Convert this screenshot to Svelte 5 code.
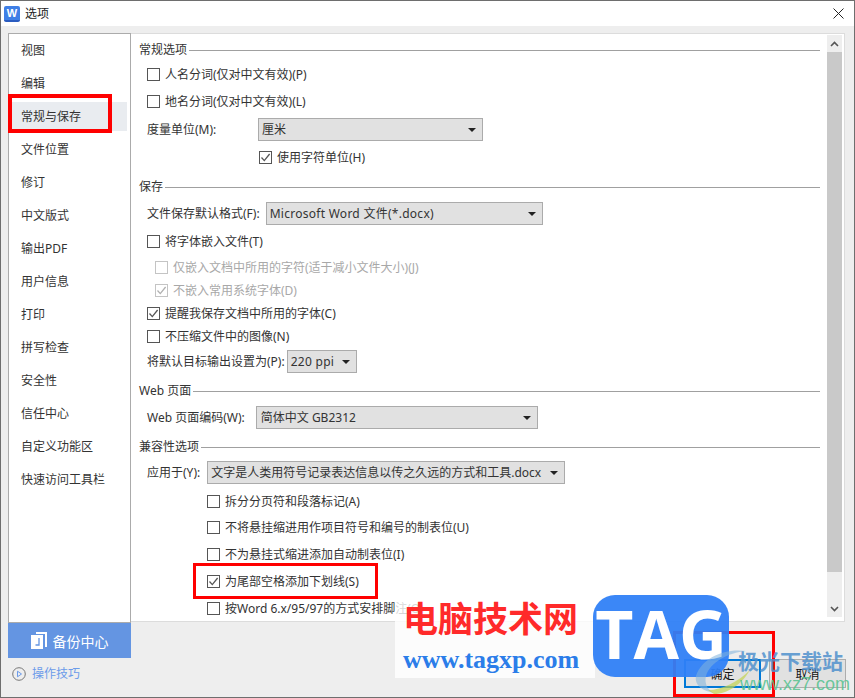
<script>
  const nav = ["视图", "编辑", "常规与保存", "文件位置", "修订", "中文版式", "输出PDF", "用户信息", "打印", "拼写检查", "安全性", "信任中心", "自定义功能区", "快速访问工具栏"];
  const selected = 2;
</script>

{#snippet check(label, gap, on = false, cls = "")}
  <label class="row {gap} {cls}">
    <span class="box" class:dim={cls.includes("muted")}>
      {#if on}
        <svg viewBox="0 0 13 13" width="13" height="13"><path d="M2.500 6.500 5.300 9.600 10.600 3" fill="none" stroke="currentColor" stroke-width="1.300" /></svg>
      {/if}
    </span>
    <span>{label}</span>
  </label>
{/snippet}

{#snippet select(text, cls)}
  <div class="select {cls}">
    <span>{text}</span>
    <i class="arrow"></i>
  </div>
{/snippet}

<div class="window">
  <header class="titlebar">
    <div class="logo">W</div>
    <span class="title">选项</span>
    <svg class="close" viewBox="0 0 12 12" width="12" height="12"><path d="M.5.5l10 10M10.500.5l-10 10" stroke="#222" stroke-width="1" fill="none" /></svg>
  </header>

  <div class="body">
    <aside class="side">
      <nav class="nav">
        {#each nav as item, i}
          <div class="nav-item" class:active={i === selected}>{item}</div>
        {/each}
      </nav>
      <button class="backup">
        <svg viewBox="0 0 16 17" width="16" height="17"><path d="M5 0h11v15h-2V2H5z M0 3h12v14H0z" fill="#fff" /><path d="M8 6v7H4.500" fill="none" stroke="#6495e2" stroke-width="1.300" /></svg>
        备份中心
      </button>
      <div class="tips">
        <svg viewBox="0 0 14 14" width="14" height="14"><circle cx="7" cy="7" r="6.300" fill="none" stroke="#777" /><path d="M5.500 4.200 9.500 7l-4 2.800z" fill="none" stroke="#6b9bea" /></svg>
        <span>操作技巧</span>
      </div>
    </aside>

    <div class="main">
      <div class="panel">
        <div class="scroll">
          <h2 class="legend">常规选项</h2>
          {@render check("人名分词(仅对中文有效)(P)", "g3")}
          {@render check("地名分词(仅对中文有效)(L)", "g4")}
          <div class="row g5 field"><span class="lbl-unit">度量单位(M):</span>{@render select("厘米", "w-unit")}</div>
          {@render check("使用字符单位(H)", "g5", true, "in-unit")}

          <h2 class="legend g8">保存</h2>
          <div class="row g5 field"><span>文件保存默认格式(F):</span>{@render select("Microsoft Word 文件(*.docx)", "w-format latin")}</div>
          {@render check("将字体嵌入文件(T)", "g5")}
          {@render check("仅嵌入文档中所用的字符(适于减小文件大小)(J)", "g3", false, "muted")}
          {@render check("不嵌入常用系统字体(D)", "g0", true, "muted")}
          {@render check("提醒我保存文档中所用的字体(C)", "g0", true)}
          {@render check("不压缩文件中的图像(N)", "g0")}
          <div class="row g2 field"><span>将默认目标输出设置为(P):</span>{@render select("220 ppi", "w-ppi latin")}</div>

          <h2 class="legend g8">Web 页面</h2>
          <div class="row g5 field"><span>Web 页面编码(W):</span>{@render select("简体中文 GB2312", "w-enc")}</div>

          <h2 class="legend g8">兼容性选项</h2>
          <div class="row g4 field"><span>应用于(Y):</span>{@render select("文字是人类用符号记录表达信息以传之久远的方式和工具.docx", "w-doc")}</div>
          {@render check("拆分分页符和段落标记(A)", "g6", false, "deep")}
          {@render check("不将悬挂缩进用作项目符号和编号的制表位(U)", "g3", false, "deep")}
          {@render check("不为悬挂式缩进添加自动制表位(I)", "g4", false, "deep")}
          {@render check("为尾部空格添加下划线(S)", "g4", true, "deep")}
          {@render check("按Word 6.x/95/97的方式安排脚注(O)", "g4", false, "deep")}
        </div>
        <div class="scrollbar">
          <div class="sb-btn"><svg viewBox="0 0 9 6" width="9" height="6"><path d="M1 5 4.500 1.500 8 5" fill="none" stroke="#555" stroke-width="1.600" /></svg></div>
          <div class="thumb"></div>
          <div class="sb-btn"><svg viewBox="0 0 9 6" width="9" height="6"><path d="M1 1 4.500 4.500 8 1" fill="none" stroke="#555" stroke-width="1.600" /></svg></div>
        </div>
      </div>
      <footer class="actions">
        <button class="btn primary">确定</button>
        <button class="btn">取消</button>
      </footer>
    </div>
  </div>

  <!-- annotations and watermark sit on top of the dialog -->
  <div class="mark mark-nav"></div>
  <div class="mark mark-check"></div>
  <div class="wm-back"></div>
  <div class="wm-site">电脑技术网</div>
  <div class="wm-url">www.tagxp.com</div>
  <div class="mark mark-ok"></div>
  <div class="wm-tag">TAG</div>
  <svg class="wm-swoosh" viewBox="0 0 70 50" width="70" height="50">
    <path d="M2 30C8 12 30 2 52 5 34 7 16 16 12 30 10 38 14 44 20 47 10 45 0 40 2 30z" fill="#7fb2dc" opacity=".55" />
    <path d="M14 44C28 44 44 36 56 24 48 38 34 48 20 48z" fill="#c3d34e" opacity=".7" />
  </svg>
  <div class="wm-xz">极光下载站</div>
  <div class="wm-xz7">www.xz7.com</div>
</div>

<style>
  :global(body) {
    margin: 0;
    background: #eee;
  }
  .window {
    position: relative;
    box-sizing: border-box;
    width: 855px;
    height: 698px;
    overflow: hidden;
    border: 1px solid #6e6e6e;
    background: #eeeeee;
    font: 12px/18px "Noto Sans", "Noto Sans CJK SC", sans-serif;
    color: #333;
  }
  .titlebar {
    display: flex;
    align-items: center;
    height: 25px;
    background: #fff;
  }
  .logo {
    width: 16px;
    height: 16px;
    margin-left: 3px;
    border-radius: 2px;
    background: #3f7fe6;
    border-bottom: 2px solid #2a5cc0;
    box-sizing: border-box;
    color: #fff;
    font: bold 11px/14px "Liberation Sans", sans-serif;
    text-align: center;
  }
  .title {
    margin-left: 5px;
    color: #222;
  }
  .close {
    margin-left: auto;
    margin-right: 9px;
  }
  .body {
    display: flex;
    height: 670px;
    padding: 7px 9px 0 7px;
    box-sizing: border-box;
  }
  .side {
    display: flex;
    flex-direction: column;
    width: 123px;
    flex: none;
  }
  .nav {
    box-sizing: border-box;
    height: 590px;
    border: 1px solid #ababab;
    background: #fff;
    display: flex;
    flex-direction: column;
  }
  .nav-item {
    flex: none;
    box-sizing: border-box;
    height: 33px;
    line-height: 30px;
    padding-left: 12px;
    margin-right: 3px;
    border: solid transparent;
    border-width: 2px 0;
    background-clip: padding-box;
    color: #333;
  }
  .active {
    background-color: #e9ecf0;
  }
  .backup {
    display: flex;
    align-items: center;
    justify-content: center;
    gap: 6px;
    height: 35px;
    border: 0;
    background: #6495e2;
    color: #fff;
    font: 14px "Noto Sans CJK SC", sans-serif;
    padding: 0;
  }
  .tips {
    display: flex;
    align-items: center;
    gap: 6px;
    margin: 7px 0 0 4px;
    color: #6b9bea;
  }
  .main {
    flex: 1;
    min-width: 0;
    display: flex;
    flex-direction: column;
  }
  .panel {
    display: flex;
    box-sizing: border-box;
    height: 589px;
    background: #fff;
    border: 1px solid #dcdcdc;
    border-left: 0;
    padding: 1px 2px 4px 0;
  }
  .scroll {
    flex: 1;
    min-width: 0;
    padding: 5px 7px 0 8px;
    overflow: hidden;
  }
  .legend {
    display: flex;
    align-items: center;
    gap: 2px;
    height: 20px;
    margin: 0;
    font: inherit;
    line-height: 20px;
    color: #333;
  }
  .legend::after {
    content: "";
    flex: 1;
    height: 1px;
    background: #a0a0a0;
  }
  .row {
    display: flex;
    align-items: center;
    height: 23px;
    padding-left: 8px;
    white-space: nowrap;
  }
  .g0 { margin-top: 0; }
  .g2 { margin-top: 2px; }
  .g3 { margin-top: 3px; }
  .g4 { margin-top: 4px; }
  .g5 { margin-top: 5px; }
  .g6 { margin-top: 6px; }
  .g8 { margin-top: 8px; }
  .box {
    display: flex;
    flex: none;
    box-sizing: border-box;
    width: 13px;
    height: 13px;
    margin-right: 5px;
    border: 1px solid #555;
    color: #555;
    background: #fff;
  }
  .box svg {
    margin: -1px;
  }
  .box.dim {
    border-color: #c4c4c4;
    color: #b0b0b0;
  }
  .muted {
    margin-left: 8px;
    color: #a8a8a8;
  }
  .in-unit {
    padding-left: 120px;
  }
  .deep {
    padding-left: 68px;
  }
  .field > span:first-child {
    margin-right: 5px;
  }
  .lbl-unit {
    min-width: 106px;
  }
  .select {
    display: flex;
    align-items: center;
    justify-content: space-between;
    box-sizing: border-box;
    height: 23px;
    padding: 0 6px 0 3px;
    border: 1px solid #ababab;
    background: #e1e1e1;
    color: #333;
  }
  .latin {
    letter-spacing: 0.27px;
  }
  .arrow {
    width: 0;
    height: 0;
    margin-left: 6px;
    border: 4px solid transparent;
    border-top: 4px solid #222;
    border-bottom: 0;
  }
  .w-unit { width: 225px; }
  .w-format { width: 277px; margin-left: 1px; }
  .w-ppi { width: 70px; margin-left: -3px; }
  .w-enc { width: 282px; margin-left: 6px; padding-left: 4px; }
  .w-doc { width: 358px; margin-left: 2px; }
  .scrollbar {
    display: flex;
    flex-direction: column;
    flex: none;
    width: 15px;
    background: #eee;
  }
  .sb-btn {
    display: flex;
    align-items: center;
    justify-content: center;
    height: 17px;
    flex: none;
  }
  .thumb {
    height: 520px;
    background: #c9c9c9;
  }
  .scrollbar .thumb + .sb-btn {
    margin-top: auto;
  }
  .actions {
    display: flex;
    justify-content: flex-end;
    gap: 8px;
    margin-top: 37px;
    margin-right: -1px;
  }
  .btn {
    width: 77px;
    height: 29px;
    padding: 0;
    box-sizing: border-box;
    border: 1px solid #adadad;
    background: #e1e1e1;
    color: #111;
    font: 12px "Noto Sans CJK SC", sans-serif;
  }
  .primary {
    border: 2px solid #0078d7;
  }
  .mark {
    position: absolute;
    box-sizing: border-box;
    border: 3px solid #f00;
  }
  .mark-nav {
    left: 7px;
    top: 93px;
    width: 104px;
    height: 39px;
    border-width: 4px;
  }
  .mark-check {
    left: 192px;
    top: 562px;
    width: 185px;
    height: 36px;
  }
  .mark-ok {
    left: 672px;
    top: 630px;
    width: 102px;
    height: 66px;
  }
  .wm-back {
    position: absolute;
    left: 394px;
    top: 600px;
    width: 200px;
    height: 77px;
    background: rgba(255, 255, 255, 0.8);
  }
  .wm-site {
    position: absolute;
    left: 402px;
    top: 594px;
    color: #ff2a2a;
    font: bold 35px/44px "Noto Sans CJK SC", sans-serif;
  }
  .wm-url {
    position: absolute;
    left: 402px;
    top: 644px;
    color: #2b7de9;
    font: bold 26px/30px "Liberation Serif", serif;
  }
  .wm-tag {
    position: absolute;
    left: 592px;
    top: 594px;
    width: 136px;
    height: 82px;
    border-radius: 22px;
    background: rgba(47, 127, 246, 0.94);
    color: #fff;
    font: bold 66px/76px "Open Sans", sans-serif;
    text-align: center;
  }
  .wm-swoosh {
    position: absolute;
    left: 693px;
    top: 645px;
  }
  .wm-xz {
    position: absolute;
    left: 737px;
    top: 645px;
    color: rgba(80, 145, 205, 0.85);
    font: bold 21px/28px "Noto Sans CJK SC", sans-serif;
  }
  .wm-xz7 {
    position: absolute;
    left: 739px;
    top: 671px;
    color: rgba(90, 195, 145, 0.9);
    font: 18px/24px "Liberation Sans", sans-serif;
  }
</style>
